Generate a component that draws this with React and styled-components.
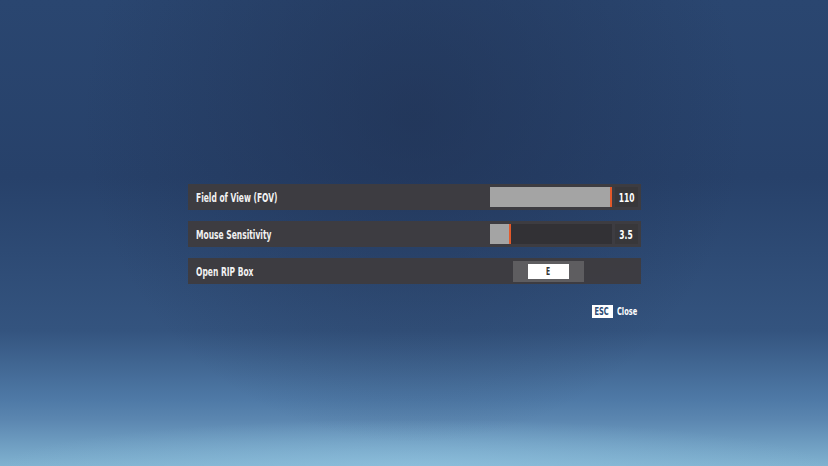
import styled, { createGlobalStyle } from "styled-components"

const GlobalStyle = createGlobalStyle`
    html, body {
        margin: 0;
        padding: 0;
    }
    body {
        font-family: "DejaVu Sans", "Liberation Sans", sans-serif;
    }
`
const Screen = styled.div`
    width: 828px;
    height: 466px;
    overflow: hidden;
    display: flex;
    flex-direction: column;
    align-items: center;
    padding-top: 184px;
    box-sizing: border-box;
    background:
        radial-gradient(ellipse 40% 70% at 50% 25%, rgba(30, 46, 78, 0.55), rgba(30, 46, 78, 0) 100%),
        radial-gradient(ellipse 50% 10% at 50% 100%, rgba(150, 200, 228, 0.5), rgba(150, 200, 228, 0) 100%),
        linear-gradient(180deg, #2a4670 0%, #27416a 38%, #34547f 71%, #4f7aa7 86%, #5b86b0 90%, #80b2d0 100%);
`
const Panel = styled.div`
    width: 453px;
    display: flex;
    flex-direction: column;
    gap: 11px;
`
const Row = styled.div`
    height: 26px;
    display: grid;
    grid-template-columns: 302px 1fr;
    align-items: center;
    background: rgba(62, 60, 64, 0.97);
`
// condensed game-ui lettering
const Narrow = styled.span`
    display: inline-block;
    font-stretch: condensed;
    font-weight: bold;
    transform: scaleX(${p => p.$squeeze || 0.67});
    transform-origin: ${p => p.$origin || "left"} center;
    white-space: nowrap;
`
const Label = styled.div`
    padding-left: 8px;
    color: #f2f2f2;
    font-size: 12.5px;
`
const SliderWrap = styled.div`
    display: flex;
    align-items: center;
    height: 100%;
`
const Track = styled.div`
    width: 122px;
    height: 20px;
    background: #323135;
    display: flex;
`
const Fill = styled.div`
    height: 100%;
    background: #a4a4a4;
    border-right: 2px solid #e3592a;
    box-sizing: border-box;
`
const Value = styled.div`
    flex: 1;
    height: 20px;
    margin: 0 3px;
    display: flex;
    align-items: center;
    justify-content: center;
    background: #38373a;
    color: #ffffff;
    font-size: 12.5px;
`
const KeyWrap = styled.div`
    display: flex;
    align-items: center;
    height: 100%;
    padding-left: 23px;
`
const KeySlot = styled.div`
    width: 71px;
    height: 21px;
    background: #5e5d60;
    display: flex;
    align-items: center;
    justify-content: center;
`
const KeyCap = styled.div`
    width: 41px;
    height: 15px;
    background: #ffffff;
    color: #333;
    font-size: 10px;
    display: flex;
    align-items: center;
    justify-content: center;
`
const Footer = styled.div`
    width: 453px;
    margin-top: 21px;
    display: flex;
    justify-content: flex-end;
    align-items: center;
    gap: 4px;
`
const EscKey = styled.div`
    background: #ffffff;
    color: #2b4a74;
    font-size: 11px;
    width: 21px;
    height: 13px;
    display: flex;
    align-items: center;
    justify-content: center;
`
const CloseText = styled.div`
    width: 23px;
    color: #ffffff;
    font-size: 11px;
    margin-right: 1px;
`

function SliderRow({ label, percent, value }) {
    return (
        <Row>
            <Label><Narrow>{label}</Narrow></Label>
            <SliderWrap>
                <Track>
                    <Fill style={{ width: percent + "%" }} />
                </Track>
                <Value><Narrow $origin="center">{value}</Narrow></Value>
            </SliderWrap>
        </Row>
    )
}

export default function App() {
    return (
        <Screen>
            <GlobalStyle />
            <Panel>
                <SliderRow label="Field of View (FOV)" percent={100} value="110" />
                <SliderRow label="Mouse Sensitivity" percent={18} value="3.5" />
                <Row>
                    <Label><Narrow>Open RIP Box</Narrow></Label>
                    <KeyWrap>
                        <KeySlot>
                            <KeyCap><Narrow $origin="center">E</Narrow></KeyCap>
                        </KeySlot>
                    </KeyWrap>
                </Row>
            </Panel>
            <Footer>
                <EscKey><Narrow $origin="center">ESC</Narrow></EscKey>
                <CloseText><Narrow>Close</Narrow></CloseText>
            </Footer>
        </Screen>
    )
}
